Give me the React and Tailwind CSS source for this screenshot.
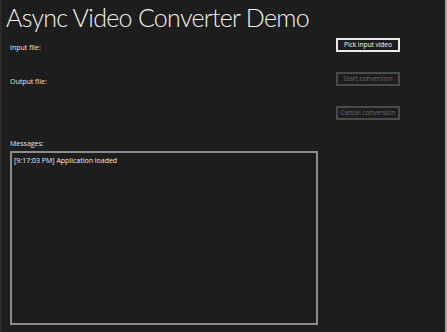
import React from "react";

export default function App() {
  const font = { fontFamily: '"Open Sans", "Noto Sans", sans-serif' };
  return (
    <div className="w-[447px] h-[332px] bg-[#1d1d1d] border-l-2 border-l-[#2a2a2a] border-r-2 border-r-[#9aa3ad] overflow-hidden text-white" style={font}>
      <h1 className="pl-[4px] pt-[1px] text-[25px] leading-[32px] font-light tracking-[-0.7px] text-[#f2f2f2] font-['Lato',sans-serif]">Async Video Converter Demo</h1>
      <div className="flex">
        <div className="w-[326px] pl-[8px]">
          <div className="h-[34px] pt-[10px] text-[7px] leading-[10px] text-[#e6e6e6]">Input file:</div>
          <div className="h-[34px] pt-[10px] text-[7px] leading-[10px] text-[#e6e6e6]">Output file:</div>
        </div>
        <div className="flex flex-col gap-[20px] pt-[5px] pl-[8px]">
          <button className="w-[64px] h-[14px] border-2 border-[#e8e8e8] text-[6.5px] font-medium leading-[10px] text-white">Pick input video</button>
          <button className="w-[64px] h-[14px] border-2 border-[#4a4a4a] text-[6.5px] font-medium leading-[10px] text-[#6a6a6a]">Start conversion</button>
          <button className="w-[64px] h-[14px] border-2 border-[#4a4a4a] text-[6.5px] font-medium leading-[10px] text-[#6a6a6a]">Cancel conversion</button>
        </div>
      </div>
      <div className="pl-[8px] pt-[19px]">
        <div className="text-[7px] leading-[10px] text-[#e6e6e6]">Messages:</div>
        <div className="mt-[2px] w-[308px] h-[174px] border-2 border-[#8c8c8c] px-[2px] pt-[3px] text-[7px] leading-[10px] text-[#eeeeee]">[9:17:03 PM] Application loaded</div>
      </div>
    </div>
  );
}
